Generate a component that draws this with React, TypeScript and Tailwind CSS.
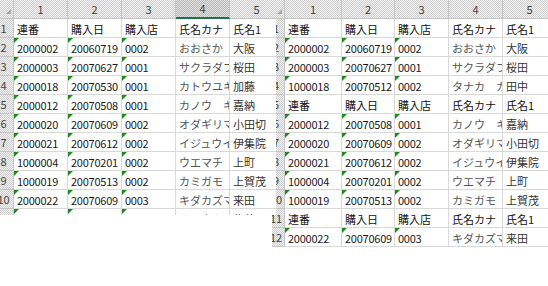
import React from "react";

type Row = string[];
const H: Row = ["連番", "購入日", "購入店", "氏名カナ", "氏名1"];

const leftRows: Row[] = [
  H,
  ["2000002", "20060719", "0002", "おおさか", "大阪"],
  ["2000003", "20070627", "0001", "サクラダファ", "桜田"],
  ["2000018", "20070530", "0001", "カトウユキコ", "加藤"],
  ["2000012", "20070508", "0001", "カノウ　キミ", "嘉納"],
  ["2000020", "20070609", "0002", "オダギリマミ", "小田切"],
  ["2000021", "20070612", "0002", "イジュウイン", "伊集院"],
  ["1000004", "20070201", "0002", "ウエマチ", "上町"],
  ["1000019", "20070513", "0002", "カミガモ", "上賀茂"],
  ["2000022", "20070609", "0003", "キダカズマ", "来田"],
  ["2000023", "20070610", "0002", "サトウカズ", "佐藤"],
];

const rightRows: Row[] = [
  H,
  ["2000002", "20060719", "0002", "おおさか", "大阪"],
  ["2000003", "20070627", "0001", "サクラダファ", "桜田"],
  ["1000018", "20070512", "0002", "タナカ　カズ", "田中"],
  H,
  ["2000012", "20070508", "0001", "カノウ　キミ", "嘉納"],
  ["2000020", "20070609", "0002", "オダギリマミ", "小田切"],
  ["2000021", "20070612", "0002", "イジュウイン", "伊集院"],
  ["1000004", "20070201", "0002", "ウエマチ", "上町"],
  ["1000019", "20070513", "0002", "カミガモ", "上賀茂"],
  H,
  ["2000022", "20070609", "0003", "キダカズマ", "来田"],
];

const hatch =
  "bg-[image:repeating-conic-gradient(#cfcfcf_0_25%,#f2f2f2_0_50%)] bg-[length:2px_2px]";
const hatchDark =
  "bg-[image:repeating-conic-gradient(#b9b9b9_0_25%,#e2e2e2_0_50%)] bg-[length:2px_2px]";

const textColors = [
  "text-[#1a1a1a] tracking-[-0.25px]",
  "text-[#1a1a1a] tracking-[-0.25px]",
  "text-[#1a1a1a] tracking-[-0.25px]",
  "text-[#555]",
  "text-[#333]",
];

function Sheet({
  rows,
  colW,
  rhW,
  rhPad,
  selected,
}: {
  rows: Row[];
  colW: string[];
  rhW: string;
  rhPad: string;
  selected?: number;
}) {
  return (
    <div
      className="flex flex-col bg-white text-[11px] leading-none"
      style={{ fontFamily: '"Noto Sans CJK JP", "Noto Sans", sans-serif' }}
    >
      <div className="flex h-[19px] shrink-0">
        <div className={`relative ${rhW} h-full shrink-0 border-r border-b border-[#c6c6c6] ${hatch}`}>
          <svg className="absolute right-[2px] bottom-[4px]" width="5" height="5" viewBox="0 0 5 5">
            <polygon points="5,0 5,5 0,5" fill="#a9a9a9" />
          </svg>
        </div>
        {colW.map((w, i) => (
          <div
            key={i}
            className={`${w} h-full shrink-0 flex items-center justify-center border-r border-[#c6c6c6] text-[#444] ${
              i === selected ? `${hatchDark} border-b-2 border-b-[#217346]` : `${hatch} border-b`
            }`}
          >
            {i + 1}
          </div>
        ))}
      </div>
      {rows.map((r, ri) => {
        const isHeader = r === H;
        return (
          <div key={ri} className="flex h-[19px] shrink-0">
            <div
              className={`${rhW} h-full shrink-0 flex items-center justify-center ${rhPad} border-r border-b border-[#c6c6c6] text-[#444] overflow-hidden whitespace-nowrap ${hatch}`}
            >
              {ri + 1}
            </div>
            {r.map((c, ci) => (
              <div
                key={ci}
                className={`relative ${colW[ci]} h-full shrink-0 flex items-center pl-[3px] pt-[2px] border-r border-b border-[#d9d9d9] overflow-hidden whitespace-nowrap ${
                  isHeader ? "text-[#111]" : textColors[ci]
                }`}
              >
                {!isHeader && ci < 3 && (
                  <span className="absolute left-0 top-0 w-0 h-0 border-t-[5px] border-t-[#1e8a1e] border-r-[5px] border-r-transparent" />
                )}
                {c}
              </div>
            ))}
          </div>
        );
      })}
    </div>
  );
}

export default function App() {
  return (
    <div className="relative w-[548px] h-[286px] bg-white overflow-hidden">
      <div className="absolute left-[272px] top-0 w-[276px] h-[247px] overflow-hidden">
        <Sheet
          rows={rightRows}
          rhW="w-[13px]"
          rhPad="pr-[4px]"
          colW={["w-[57px]", "w-[53px]", "w-[54px]", "w-[54px]", "w-[54px]"]}
        />
      </div>
      <div className="absolute left-0 top-0 z-10 w-[276px] h-[215px] overflow-hidden">
        <Sheet
          rows={leftRows}
          rhW="w-[14px]"
          rhPad="pr-[6px]"
          selected={3}
          colW={["w-[54px]", "w-[54px]", "w-[54px]", "w-[54px]", "w-[54px]"]}
        />
      </div>
    </div>
  );
}
